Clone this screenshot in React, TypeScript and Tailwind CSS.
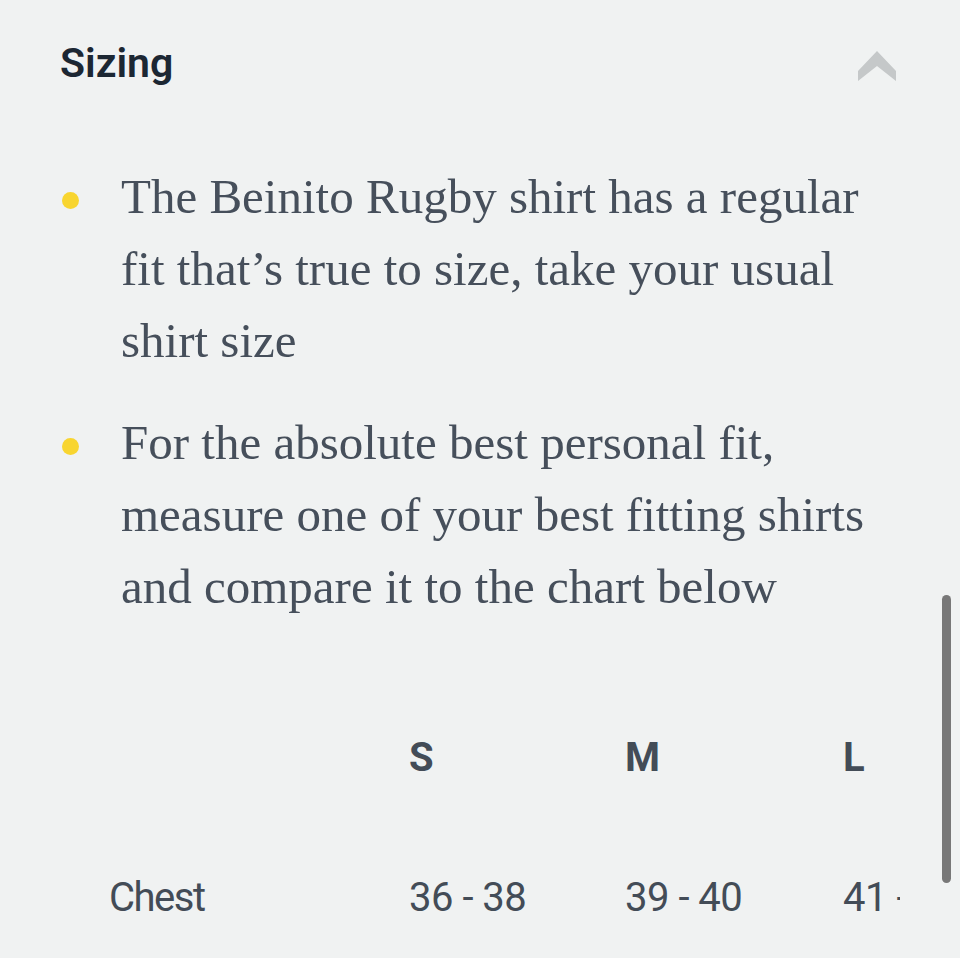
import React from 'react';

const bullets = [
  'The Beinito Rugby shirt has a regular fit that\u2019s true to size, take your usual shirt size',
  'For the absolute best personal fit, measure one of your best fitting shirts and compare it to the chart below',
];

const sizes = ['S', 'M', 'L', 'XL'];
const rows = [{ label: 'Chest', values: ['36 - 38', '39 - 40', '41 - 42', '43 - 44'] }];

function ChevronUp() {
  return (
    <svg width="40" height="32" viewBox="0 0 40 32" className="block">
      <path d="M19 0 L38 20 L38 30 L19 15 L0 30 L0 20 Z" fill="#c5c8c9" />
    </svg>
  );
}

export default function App() {
  return (
    <div className="relative h-[958px] w-[960px] overflow-hidden bg-[#f0f2f2]">
      {/* Header */}
      <div className="flex items-start justify-between pl-[60px] pr-[62px] pt-[38px]">
        <h2 className="text-[41px] leading-[50px] font-semibold text-[#1c2733] [font-family:Roboto,'Liberation_Sans',sans-serif]">
          Sizing
        </h2>
        <div className="pt-[13px]">
          <ChevronUp />
        </div>
      </div>

      {/* Bullets */}
      <ul className="mt-[73px] flex flex-col gap-[30px] pl-[62px]">
        {bullets.map((text, i) => (
          <li key={i} className="flex">
            <span className="mt-[31px] h-[17px] w-[17px] shrink-0 rounded-full bg-[#f8d530]" />
            <p className="ml-[42px] w-[770px] text-[49px] leading-[72px] text-[#464f5b] [font-family:'Liberation_Serif',serif]">
              {text}
            </p>
          </li>
        ))}
      </ul>

      {/* Size chart */}
      <div className="mt-[111px] w-[900px] overflow-hidden">
        <div className="grid w-max grid-cols-[300px_216px_218px_216px_216px] pl-[109px] text-[#434c57] [font-family:Roboto,sans-serif]">
          <div />
          {sizes.map((s) => (
            <div key={s} className="whitespace-nowrap text-[40px] leading-[48px] font-bold tracking-[-1px]">
              {s}
            </div>
          ))}
          {rows.map((row) => (
            <React.Fragment key={row.label}>
              <div className="mt-[91px] whitespace-nowrap text-[40px] leading-[50px] tracking-[-1.5px]">
                {row.label}
              </div>
              {row.values.map((v, i) => (
                <div key={i} className="mt-[91px] whitespace-nowrap text-[40px] leading-[50px] tracking-[-0.5px]">
                  {v}
                </div>
              ))}
            </React.Fragment>
          ))}
        </div>
      </div>

      {/* Scroll indicator */}
      <div className="absolute left-[942px] top-[595px] h-[288px] w-[9px] rounded-full bg-[#787878]" />
    </div>
  );
}
